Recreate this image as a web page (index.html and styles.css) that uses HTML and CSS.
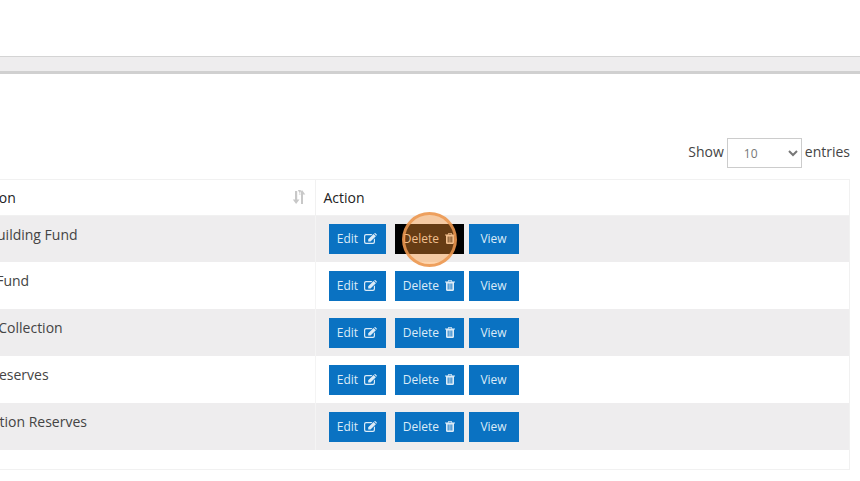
FILE: index.html
```html
<!DOCTYPE html>
<html lang="en">
<head>
<meta charset="utf-8">
<title>Funds</title>
<link rel="stylesheet" href="styles.css">
</head>
<body>
<svg class="defs" width="0" height="0" aria-hidden="true">
  <symbol id="i-edit" viewBox="0 0 13 11">
    <path d="M2 1h6.5L7.3 2.2H2.2a1 1 0 0 0-1 1v5.6a1 1 0 0 0 1 1h6.6a1 1 0 0 0 1-1V6.4l1.2-1.2V9a2 2 0 0 1-2 2H2a2 2 0 0 1-2-2V3a2 2 0 0 1 2-2Z"/>
    <path d="M4.2 6.2 9.6.9l2.3 2.3-5.4 5.4H4.2ZM10.2.4l.5-.4h.5l1.6 1.6v.5l-.5.6Z"/>
  </symbol>
  <symbol id="i-trash" viewBox="0 0 10 11">
    <path d="M3.4 0h3.2l.7 1.6H10v1H9v7.2C9 10.5 8.5 11 8 11H2c-.5 0-1-.5-1-1.200V2.600H0v-1h2.700ZM3.500 1.600h3L6.200.8H3.800ZM2.700 3.500v6h.9v-6Zm1.900 0v6h.9v-6Zm1.800 0v6h.9v-6Z" fill-rule="evenodd"/>
  </symbol>
</svg>
<header class="top-space"></header>
<div class="band"></div>
<main class="content">
  <div class="length-row">
    <label class="length">Show
      <select class="length-select"><option>10</option><option>25</option><option>50</option></select>
      entries</label>
  </div>
  <div class="table-frame">
    <table class="funds">
      <thead>
        <tr>
          <th class="col-name"><span class="th-inner">Description
            <svg class="sort" viewBox="0 0 14 14" aria-hidden="true"><path d="M3 1h2.200v8.500H7.500L4.100 14 .8 9.500H3ZM8.800 5V.0L5.800 0M9 14V4.500H6.700L10 0l3.300 4.500H11V14Z"/></svg></span></th>
          <th class="col-action">Action</th>
        </tr>
      </thead>
      <tbody>
        <tr class="odd"><td>School Building Fund</td><td><div class="acts"><a class="btn">Edit <svg class="ic-edit"><use href="#i-edit"/></svg></a><a class="btn btn-del active">Delete <svg class="ic-trash"><use href="#i-trash"/></svg></a><a class="btn">View</a></div></td></tr>
        <tr><td>General Fund</td><td><div class="acts"><a class="btn">Edit <svg class="ic-edit"><use href="#i-edit"/></svg></a><a class="btn btn-del">Delete <svg class="ic-trash"><use href="#i-trash"/></svg></a><a class="btn">View</a></div></td></tr>
        <tr class="odd"><td>Offering Collection</td><td><div class="acts"><a class="btn">Edit <svg class="ic-edit"><use href="#i-edit"/></svg></a><a class="btn btn-del">Delete <svg class="ic-trash"><use href="#i-trash"/></svg></a><a class="btn">View</a></div></td></tr>
        <tr><td>Special Reserves</td><td><div class="acts"><a class="btn">Edit <svg class="ic-edit"><use href="#i-edit"/></svg></a><a class="btn btn-del">Delete <svg class="ic-trash"><use href="#i-trash"/></svg></a><a class="btn">View</a></div></td></tr>
        <tr class="odd"><td>Construction Reserves</td><td><div class="acts"><a class="btn">Edit <svg class="ic-edit"><use href="#i-edit"/></svg></a><a class="btn btn-del">Delete <svg class="ic-trash"><use href="#i-trash"/></svg></a><a class="btn">View</a></div></td></tr>
      </tbody>
    </table>
  </div>
</main>
<div class="click-marker"></div>
</body>
</html>
```
FILE: styles.css
```css
html, body { margin: 0; padding: 0; height: 481px; overflow: hidden; background: #fff; }
body { font-family: "Open Sans", "Liberation Sans", sans-serif; font-size: 14px; color: #444; position: relative; }
.defs { position: absolute; }
.top-space { height: 56px; }
.band { height: 14px; background: #eeedee; border-top: 1px solid #d4d4d4; border-bottom: 3px solid #d0d0d0; }
.content { padding: 64px 10px 0 0; }
.length-row { display: flex; justify-content: flex-end; height: 41px; }
.length { display: flex; align-items: flex-start; gap: 3px; line-height: 28px; color: #444; height: 30px; }
.length-select { width: 75px; height: 30px; margin: 0; padding: 0 12px; border: 1px solid #ccc; background: #fff; color: #777; font-family: inherit; font-size: 12px; border-radius: 0; }
.table-frame { margin-left: -72px; border: 1px solid #f1f1f1; height: 291px; box-sizing: border-box; }
.funds { width: 100%; border-collapse: collapse; table-layout: fixed; }
.funds th { height: 35px; padding: 0 8px; text-align: left; font-weight: 400; color: #222; border-right: 1px solid #f1f1f1; border-bottom: 1px solid #f1f1f1; box-sizing: border-box; }
.col-name { width: 386px; }
.funds th.col-action { border-right: 0; }
.th-inner { display: flex; justify-content: space-between; align-items: center; padding-left: 4px; }
.sort { width: 14px; height: 14px; fill: #c8c8c8; margin-right: 1px; }
.funds td { height: 47px; padding: 9px 8px 0 12px; vertical-align: top; border-right: 1px solid #f4f4f4; box-sizing: border-box; line-height: 20px; color: #444; }
.funds td:last-child { padding: 0 0 0 13px; vertical-align: middle; border-right: 0; }
.odd td { background: #eeedee; }
.acts { display: flex; align-items: center; }
.btn { display: flex; align-items: center; justify-content: center; gap: 3px; width: 57px; height: 30px; background: #0a72c2; color: #dcebf7; font-size: 12px; white-space: pre; }
.btn-del { width: 69px; margin: 0 5px 0 9px; }
.btn:last-child { width: 50px; }
.active { background: #000; color: #e9d9c8; }
.ic-edit { width: 13px; height: 11px; fill: currentColor; }
.ic-trash { width: 10px; height: 11px; fill: currentColor; }
.click-marker { position: absolute; left: 402px; top: 212px; width: 55px; height: 55px; box-sizing: border-box; border-radius: 50%; border: 3px solid rgba(235, 150, 80, .85); background: rgba(255, 150, 50, .4); }
```
